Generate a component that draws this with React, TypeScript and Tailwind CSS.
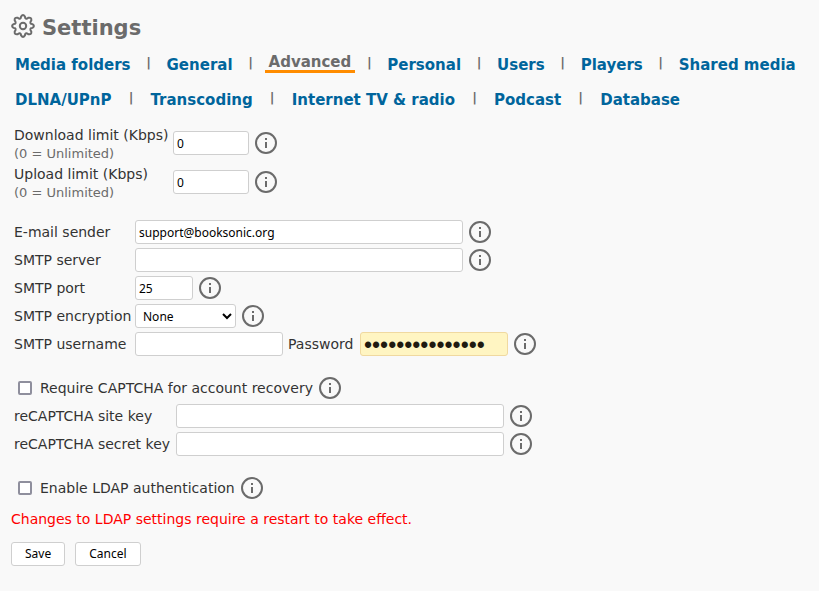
import React from "react";

const FIELD =
  "h-6 min-w-0 rounded-[3px] border border-[#cfcfcf] bg-white px-[3px] font-['Noto_Sans',Tahoma,sans-serif] text-[12px] text-black outline-none";
const BUTTON =
  "h-6 rounded-[3px] border border-[#cfcfcf] bg-white px-[13px] font-['Noto_Sans',Tahoma,sans-serif] text-[12px] leading-4 text-black";
const CHECKBOX =
  "size-[14px] shrink-0 appearance-none rounded-[2px] border-2 border-[#8f8f9d] bg-white";

const MAIN_TABS = ["Media folders", "General", "Advanced", "Personal", "Users", "Players", "Shared media"];
const MORE_TABS = ["DLNA/UPnP", "Transcoding", "Internet TV & radio", "Podcast", "Database"];

function GearIcon() {
  return (
    <svg className="size-6 shrink-0" viewBox="0 0 24 24" fill="none" stroke="#6b6b6b" strokeWidth="2" strokeLinejoin="round" aria-hidden="true">
      <circle cx="12" cy="12" r="3.2" />
      <path d="M10.1 2.6Q12 -.4 13.9 2.6L14.3 4.1Q15 5 16.2 4.5L17.5 3.7Q20.8 3.2 20.3 6.5L19.5 7.8Q19 9 19.9 9.7L21.4 10.1Q24.4 12 21.4 13.9L19.9 14.3Q19 15 19.5 16.2L20.3 17.5Q20.8 20.8 17.5 20.3L16.2 19.5Q15 19 14.3 19.9L13.9 21.4Q12 24.4 10.1 21.4L9.7 19.9Q9 19 7.8 19.5L6.5 20.3Q3.2 20.8 3.7 17.5L4.5 16.2Q5 15 4.1 14.3L2.6 13.9Q-.4 12 2.6 10.1L4.1 9.7Q5 9 4.5 7.8L3.7 6.5Q3.2 3.2 6.5 3.7L7.8 4.5Q9 5 9.7 4.1Z" />
    </svg>
  );
}

function Info() {
  return (
    <button type="button" aria-label="Help" className="ml-1.5 size-[22px] shrink-0">
      <svg className="block size-full" viewBox="0 0 22 22" aria-hidden="true">
        <circle cx="11" cy="11" r="10" fill="none" stroke="#6b6b6b" strokeWidth="2" />
        <path d="M10 6h2v2h-2zM10 10h2v6h-2z" fill="#6b6b6b" />
      </svg>
    </button>
  );
}

function Tabs({ tabs, separator }: { tabs: string[]; separator: string }) {
  return (
    <div className="flex flex-wrap">
      {tabs.map((tab, index) => (
        <div key={tab} className="flex h-[35px] items-center leading-4">
          {tab === "Advanced" ? (
            <a href="#" aria-current="page" className="border-b-3 border-[#ff8c00] px-1 text-[#6b6b6b]">
              {tab}
            </a>
          ) : (
            <a href="#" className="px-1 pt-0.5 text-[#00659c]">
              {tab}
            </a>
          )}
          {index < tabs.length - 1 && (
            <span className={`${separator} pb-0.5 text-center text-[13px] text-[#6b6b6b]`}>|</span>
          )}
        </div>
      ))}
    </div>
  );
}

function LimitRow({ id, label }: { id: string; label: string }) {
  return (
    <>
      <label htmlFor={id} className="h-[39px] leading-[18px]">
        <span className="block">{label}</span>
        <span className="block pt-px text-[13px] text-[#6b6b6b]">(0 = Unlimited)</span>
      </label>
      <div className="flex h-[34px] items-center">
        <input id={id} defaultValue="0" className={`${FIELD} w-[76px]`} />
        <Info />
      </div>
    </>
  );
}

function Row({ id, label, children }: { id: string; label: string; children: React.ReactNode }) {
  return (
    <>
      <label htmlFor={id}>{label}</label>
      <div className="flex h-7 items-center">{children}</div>
    </>
  );
}

export default function App() {
  return (
    <div className="min-h-screen bg-[#f9f9f9] px-[11px] pt-3.5 pb-6 font-['DejaVu_Sans',Verdana,sans-serif] text-[14px] leading-5 text-[#333]">
      <h1 className="flex h-6 items-center gap-[7px] text-[21px] font-bold text-[#6b6b6b]">
        <GearIcon />
        <span className="pt-1">Settings</span>
      </h1>

      <nav className="mt-2 text-[15px] font-bold">
        <Tabs tabs={MAIN_TABS} separator="w-7" />
        <Tabs tabs={MORE_TABS} separator="w-[31px]" />
      </nav>

      <form className="px-[3px]" onSubmit={(e) => e.preventDefault()}>
        <section className="mt-2.5 grid grid-cols-[159px_1fr]">
          <LimitRow id="download" label="Download limit (Kbps)" />
          <LimitRow id="upload" label="Upload limit (Kbps)" />
        </section>

        <section className="mt-3.5 grid grid-cols-[121px_1fr] items-center">
          <Row id="sender" label="E-mail sender">
            <input id="sender" defaultValue="support@booksonic.org" className={`${FIELD} w-[328px]`} />
            <Info />
          </Row>
          <Row id="server" label="SMTP server">
            <input id="server" className={`${FIELD} w-[328px]`} />
            <Info />
          </Row>
          <Row id="port" label="SMTP port">
            <input id="port" defaultValue="25" className={`${FIELD} w-[58px]`} />
            <Info />
          </Row>
          <Row id="encryption" label="SMTP encryption">
            <select id="encryption" className={`${FIELD} w-[101px]`}>
              <option>None</option>
              <option>STARTTLS</option>
              <option>SSL/TLS</option>
            </select>
            <Info />
          </Row>
          <Row id="username" label="SMTP username">
            <input id="username" className={`${FIELD} w-[148px]`} />
            <label htmlFor="password" className="w-[77px] pl-[5px]">
              Password
            </label>
            <input
              id="password"
              type="password"
              defaultValue="xxxxxxxxxxxxxxx"
              className="h-6 w-[148px] rounded-[3px] border border-[#f0d9a0] bg-[#fff5c2] px-[3px] pt-0.5 font-['Liberation_Sans',sans-serif] text-[23px] text-[#1f1a10] outline-none"
            />
            <Info />
          </Row>
        </section>

        <section className="mt-4">
          <div className="flex h-7 items-center pl-1">
            <input id="captcha" type="checkbox" className={CHECKBOX} />
            <label htmlFor="captcha" className="pl-2">
              Require CAPTCHA for account recovery
            </label>
            <Info />
          </div>
          <div className="grid grid-cols-[162px_1fr] items-center">
            <Row id="site-key" label="reCAPTCHA site key">
              <input id="site-key" className={`${FIELD} w-[328px]`} />
              <Info />
            </Row>
            <Row id="secret-key" label="reCAPTCHA secret key">
              <input id="secret-key" className={`${FIELD} w-[328px]`} />
              <Info />
            </Row>
          </div>
        </section>

        <section className="mt-4 flex h-7 items-center pl-1">
          <input id="ldap" type="checkbox" className={CHECKBOX} />
          <label htmlFor="ldap" className="pl-2">
            Enable LDAP authentication
          </label>
          <Info />
        </section>

        <div className="-mx-[3px]">
          <p className="mt-[7px] text-[#ff0000]">Changes to LDAP settings require a restart to take effect.</p>
          <div className="mt-[13px] flex gap-2.5">
            <button type="submit" className={BUTTON}>
              Save
            </button>
            <button type="button" className={BUTTON}>
              Cancel
            </button>
          </div>
        </div>
      </form>
    </div>
  );
}
